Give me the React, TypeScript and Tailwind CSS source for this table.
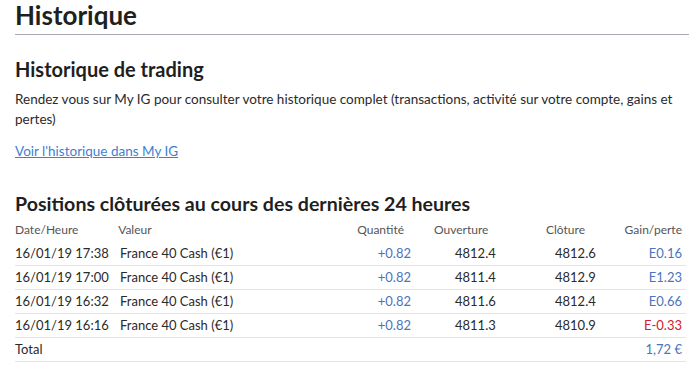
import React from 'react';

type Trade = {
  date: string;
  market: string;
  qty: string;
  open: string;
  close: string;
  pl: string;
  loss?: boolean;
};

const TRADES: Trade[] = [
  { date: '16/01/19 17:38', market: 'France 40 Cash (€1)', qty: '+0.82', open: '4812.4', close: '4812.6', pl: 'E0.16' },
  { date: '16/01/19 17:00', market: 'France 40 Cash (€1)', qty: '+0.82', open: '4811.4', close: '4812.9', pl: 'E1.23' },
  { date: '16/01/19 16:32', market: 'France 40 Cash (€1)', qty: '+0.82', open: '4811.6', close: '4812.4', pl: 'E0.66' },
  { date: '16/01/19 16:16', market: 'France 40 Cash (€1)', qty: '+0.82', open: '4811.3', close: '4810.9', pl: 'E-0.33', loss: true },
];

const TradeRow: React.FC<{ trade: Trade }> = ({ trade }) => (
  <div className="flex items-center h-[24px] border-b border-[#e4e4e4] text-[13px] text-[#2a2a2a] whitespace-nowrap">
    <div className="w-[105px]">{trade.date}</div>
    <div className="w-[186px]">{trade.market}</div>
    <div className="w-[105px] text-right text-[#4a74bd]">{trade.qty}</div>
    <div className="w-[144px] pl-[44px]">{trade.open}</div>
    <div className="w-[80px]">{trade.close}</div>
    <div className={`flex-1 text-right pr-[4px] ${trade.loss ? 'text-[#d1202f]' : 'text-[#4a74bd]'}`}>{trade.pl}</div>
  </div>
);

const App: React.FC = () => {
  return (
    <div className="w-[689px] h-[386px] bg-white overflow-hidden font-['Lato','Liberation_Sans',sans-serif] text-[#2a2a2a]">
      <div className="ml-[15px] h-[35px] border-b border-[#a9a9b3]">
        <h1 className="text-[26px] font-bold leading-[30px] text-[#1f1f1f]">Historique</h1>
      </div>

      <div className="pl-[15px] pr-[3px]">
        <h2 className="mt-[22px] text-[20px] font-bold leading-[24px] text-[#1f1f1f]">Historique de trading</h2>
        <p className="mt-[8px] text-[13.5px] leading-[20px]">
          Rendez vous sur My IG pour consulter votre historique complet (transactions, activité sur votre compte, gains et pertes)
        </p>
        <a href="#" className="block mt-[12px] text-[13.5px] leading-[20px] text-[#3f7fd0] underline">
          Voir l'historique dans My IG
        </a>

        <h2 className="mt-[31px] text-[19.6px] font-bold leading-[24px] text-[#1f1f1f]">
          Positions clôturées au cours des dernières 24 heures
        </h2>

        <div className="mt-[2px]">
          <div className="flex items-center h-[24px] text-[12px] text-[#555] whitespace-nowrap">
            <div className="w-[105px]">Date/Heure</div>
            <div className="w-[186px]">Valeur</div>
            <div className="w-[105px] text-right">Quantité</div>
            <div className="w-[144px] pl-[30px]">Ouverture</div>
            <div className="w-[80px]">Clôture</div>
            <div className="flex-1 text-right pr-[4px]">Gain/perte</div>
          </div>
          {TRADES.map((t) => (
            <TradeRow key={t.date} trade={t} />
          ))}
          <div className="flex items-center h-[24px] border-b border-[#e4e4e4] text-[13px]">
            <div className="flex-1">Total</div>
            <div className="text-right pr-[4px] text-[#4a74bd]">1,72 €</div>
          </div>
        </div>
      </div>
    </div>
  );
};

export default App;
